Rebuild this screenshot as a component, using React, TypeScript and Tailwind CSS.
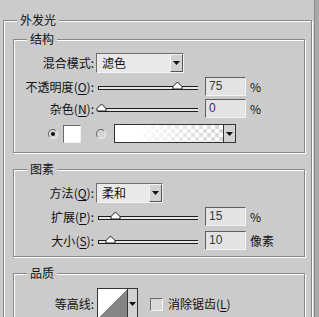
import type { ReactNode } from "react";

function Group({ title, className, children }: { title: string; className?: string; children: ReactNode }) {
  return (
    <fieldset className={`border border-[#868686] shadow-[inset_1px_1px_0_#fff,1px_1px_0_#fff] ${className ?? ""}`}>
      <legend className="ml-[13px] px-[3px] leading-[14px] bg-[#cbcbcb]">{title}</legend>
      {children}
    </fieldset>
  );
}

function Label({ text, k }: { text: string; k?: string }) {
  return (
    <div className="w-[80px] text-right whitespace-nowrap leading-[14px]">
      {text}
      {k && (
        <>
          (<span className="underline underline-offset-2">{k}</span>)
        </>
      )}
      :
    </div>
  );
}

function Arrow() {
  return (
    <svg width="7" height="4" viewBox="0 0 7 4">
      <path d="M0 0 H7 L3.5 4 Z" fill="#111" />
    </svg>
  );
}

function Select({ value, width }: { value: string; width: string }) {
  return (
    <div className={`ml-[2px] h-[20px] ${width} flex border border-t-[#6f6f6f] border-l-[#6f6f6f] border-b-[#f4f4f4] border-r-[#f4f4f4] bg-[#e9e9e9]`}>
      <div className="flex-1 pl-[5px] leading-[18px]">{value}</div>
      <div className="w-[13px] flex items-center justify-center bg-[#d2d2d2] border border-t-[#f4f4f4] border-l-[#f4f4f4] border-b-[#555] border-r-[#555]">
        <Arrow />
      </div>
    </div>
  );
}

function Slider({ pos }: { pos: number }) {
  return (
    <div className="relative ml-[4px] w-[100px] h-[4px] mt-[2px] border-y border-[#1e1e1e] border-l border-l-[#1e1e1e] bg-[#e6e6e6]">
      <svg
        className="absolute top-[-6px]"
        style={{ left: pos - 5 }}
        width="11"
        height="9"
        viewBox="0 0 11 9"
      >
        <path d="M1 8 V5.5 L5.5 1 L10 5.5 V8 Z" fill="#fff" stroke="#1e1e1e" strokeWidth="1" />
      </svg>
    </div>
  );
}

function NumField({ value }: { value: string }) {
  return (
    <div className="ml-[7px] w-[41px] h-[19px] border border-t-[#5e5e5e] border-l-[#5e5e5e] border-b-[#f2f2f2] border-r-[#f2f2f2] bg-[#e3e3e3] pl-[3px] leading-[17px] font-['Liberation_Sans',sans-serif] text-[12px] text-[#3a3a3a]">
      {value}
    </div>
  );
}

function SliderRow({ text, k, pos, value, unit }: { text: string; k: string; pos: number; value: string; unit: string }) {
  return (
    <div className="flex items-center">
      <Label text={text} k={k} />
      <Slider pos={pos} />
      <NumField value={value} />
      <span className="ml-[4px] leading-[14px]">{unit}</span>
    </div>
  );
}

function Radio({ checked }: { checked?: boolean }) {
  return (
    <div className="w-[10px] h-[10px] rounded-full border border-t-[#6a6a6a] border-l-[#6a6a6a] border-b-[#f4f4f4] border-r-[#f4f4f4] bg-[#d4d4d4] flex items-center justify-center">
      {checked && <div className="w-[4px] h-[4px] rounded-full bg-[#111]" />}
    </div>
  );
}

export default function App() {
  return (
    <div className="w-[319px] h-[317px] overflow-hidden flex bg-[#cbcbcb] text-[12px] text-[#111] font-['Noto_Sans_CJK_SC','Noto_Sans',sans-serif]">
      <div className="flex-1 pl-[3px] pt-[13px]">
        <Group title="外发光" className="w-[309px] h-[330px]">
          <Group title="结构" className="mt-[5px] ml-[9px] mr-[6px] pb-[9px]">
            <div className="flex flex-col pt-[7px]">
              <div className="flex items-center">
                <Label text="混合模式" />
                <Select value="滤色" width="w-[88px]" />
              </div>
              <div className="mt-[4px]">
                <SliderRow text="不透明度" k="O" pos={78} value="75" unit="%" />
              </div>
              <div className="mt-[3px]">
                <SliderRow text="杂色" k="N" pos={2} value="0" unit="%" />
              </div>
              <div className="mt-[6px] flex items-center pl-[34px]">
                <Radio checked />
                <div className="ml-[5px] w-[18px] h-[18px] bg-white border border-t-[#6a6a6a] border-l-[#6a6a6a] border-b-[#f0f0f0] border-r-[#f0f0f0]" />
                <div className="ml-[15px]">
                  <Radio />
                </div>
                <div className="ml-[8px] w-[122px] h-[19px] flex border border-[#333]">
                  <div className="flex-1 bg-[linear-gradient(to_right,#fff_15%,rgba(255,255,255,0)),repeating-conic-gradient(#d6d6d6_0_25%,#fff_0_50%)] bg-[length:100%_100%,8px_8px]" />
                  <div className="w-[12px] flex items-center justify-center bg-[#d2d2d2] border-l border-[#333]">
                    <Arrow />
                  </div>
                </div>
              </div>
            </div>
          </Group>

          <Group title="图素" className="mt-[9px] ml-[9px] mr-[6px] pb-[6px]">
            <div className="flex flex-col pt-[7px]">
              <div className="flex items-center">
                <Label text="方法" k="Q" />
                <Select value="柔和" width="w-[67px]" />
              </div>
              <div className="mt-[4px]">
                <SliderRow text="扩展" k="P" pos={16} value="15" unit="%" />
              </div>
              <div className="mt-[5px]">
                <SliderRow text="大小" k="S" pos={11} value="10" unit="像素" />
              </div>
            </div>
          </Group>

          <Group title="品质" className="mt-[9px] ml-[9px] mr-[6px] pb-[8px]">
            <div className="flex items-center pt-[8px]">
              <Label text="等高线" />
              <div className="ml-[3px] w-[41px] h-[32px] flex border border-[#333]">
                <div className="flex-1 bg-[linear-gradient(to_bottom_right,#fff_50%,#858585_50%)]" />
                <div className="w-[10px] flex items-center justify-center bg-[#d2d2d2] border-l border-[#333]">
                  <Arrow />
                </div>
              </div>
              <div className="ml-[12px] w-[13px] h-[13px] border border-t-[#6a6a6a] border-l-[#6a6a6a] border-b-[#f4f4f4] border-r-[#f4f4f4] bg-[#d8d8d8]" />
              <span className="ml-[5px] leading-[14px]">
                消除锯齿(<span className="underline underline-offset-2">L</span>)
              </span>
            </div>
          </Group>
        </Group>
      </div>
      <div className="w-[5px] border-l border-[#8a8a8a] bg-[#a9a9a9]" />
    </div>
  );
}
